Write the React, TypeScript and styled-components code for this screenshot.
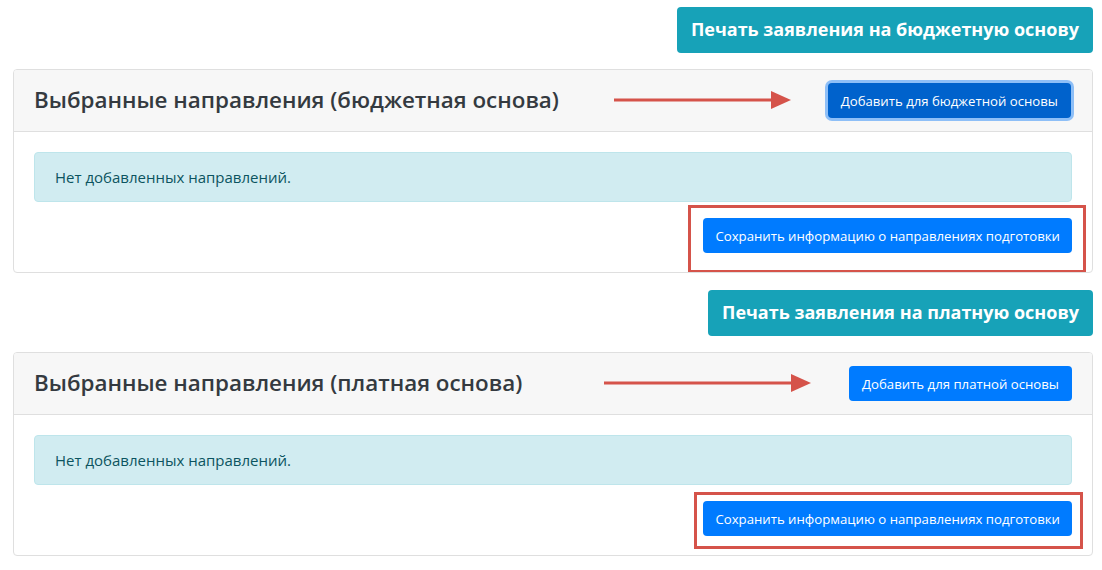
import styled, { createGlobalStyle } from "styled-components";

const GlobalStyle = createGlobalStyle`
  body {
    margin: 0;
    background: #fff;
    font-family: "Open Sans", "Noto Sans", Arial, sans-serif;
    color: #212529;
  }
`;

const Page = styled.div`
  padding: 7px 9px 0 13px;
  display: flex;
  flex-direction: column;
`;

const PrintRow = styled.div`
  display: flex;
  justify-content: flex-end;
  margin-bottom: 16px;
`;

const PrintBtn = styled.button`
  background: #17a2b8;
  color: #fff;
  border: none;
  border-radius: 4px;
  height: 46px;
  padding: 0 14px 3px;
  font-family: "Open Sans", sans-serif;
  font-size: 18px;
  font-weight: 700;
`;

const Card = styled.section`
  border: 1px solid #dfdfdf;
  border-radius: 4px;
  margin-bottom: 17px;
  overflow: hidden;
`;

const CardHeader = styled.header`
  position: relative;
  background: #f7f7f7;
  border-bottom: 1px solid #dfdfdf;
  height: 61px;
  padding: 0 20px;
  display: flex;
  align-items: center;
  justify-content: space-between;
`;

const Title = styled.h4`
  margin: 0 0 3px;
  font-size: 22.4px;
  font-weight: 600;
  color: #343a40;
`;

const AddBtn = styled.button<{ $focused?: boolean }>`
  background: ${(p) => (p.$focused ? "#0062cc" : "#007bff")};
  color: #fff;
  border: none;
  border-radius: 4px;
  height: 35px;
  padding: 0 13px;
  font-family: "Open Sans", sans-serif;
  font-size: 13.2px;
  box-shadow: ${(p) => (p.$focused ? "0 0 0 3px #8ebff7" : "none")};
  margin-right: ${(p) => (p.$focused ? "1px" : "0")};
`;

const Arrow = styled.svg<{ $left: number; $width: number }>`
  position: absolute;
  top: 50%;
  left: ${(p) => p.$left}px;
  width: ${(p) => p.$width}px;
  height: 20px;
  margin-top: -11px;
`;

const CardBody = styled.div`
  padding: 20px 20px 19px;
  display: flex;
  flex-direction: column;
`;

const Alert = styled.div`
  background: #d1ecf1;
  border: 1px solid #bee5eb;
  border-radius: 4px;
  color: #0c5460;
  font-size: 15px;
  height: 48px;
  padding: 0 20px;
  display: flex;
  align-items: center;
  margin-bottom: 16px;
`;

const SaveRow = styled.div`
  position: relative;
  display: flex;
  justify-content: flex-end;
`;

const SaveBtn = styled.button`
  background: #007bff;
  color: #fff;
  border: none;
  border-radius: 4px;
  height: 35px;
  padding: 0 12px;
  font-family: "Open Sans", sans-serif;
  font-size: 13.2px;
`;

const Mark = styled.div<{ $l: number; $r: number; $t: number; $b: number }>`
  position: absolute;
  left: ${(p) => p.$l}px;
  right: ${(p) => p.$r}px;
  top: ${(p) => p.$t}px;
  bottom: ${(p) => p.$b}px;
  border: 3px solid #d5534a;
  pointer-events: none;
`;

const RedArrow = ({ left, width }: { left: number; width: number }) => (
  <Arrow $left={left} $width={width} viewBox={`0 0 ${width} 20`}>
    <line x1="0" y1="10" x2={width - 14} y2="10" stroke="#d5534a" strokeWidth="3" />
    <polygon points={`${width - 20},1 ${width},10 ${width - 20},19`} fill="#d5534a" />
  </Arrow>
);

type SectionProps = {
  print: string;
  title: string;
  add: string;
  focused?: boolean;
  arrow: { left: number; width: number };
  mark: { l: number; r: number; t: number; b: number };
};

const Section = ({ print, title, add, focused, arrow, mark }: SectionProps) => (
  <>
    <PrintRow>
      <PrintBtn>{print}</PrintBtn>
    </PrintRow>
    <Card>
      <CardHeader>
        <Title>{title}</Title>
        <RedArrow left={arrow.left} width={arrow.width} />
        <AddBtn $focused={focused}>{add}</AddBtn>
      </CardHeader>
      <CardBody>
        <Alert>Нет добавленных направлений.</Alert>
        <SaveRow>
          <SaveBtn>Сохранить информацию о направлениях подготовки</SaveBtn>
          <Mark $l={mark.l} $r={mark.r} $t={mark.t} $b={mark.b} />
        </SaveRow>
      </CardBody>
    </Card>
  </>
);

export default function App() {
  return (
    <Page>
      <GlobalStyle />
      <Section
        print="Печать заявления на бюджетную основу"
        title="Выбранные направления (бюджетная основа)"
        add="Добавить для бюджетной основы"
        focused
        arrow={{ left: 600, width: 177 }}
        mark={{ l: 654, r: -14, t: -13, b: -20 }}
      />
      <Section
        print="Печать заявления на платную основу"
        title="Выбранные направления (платная основа)"
        add="Добавить для платной основы"
        arrow={{ left: 590, width: 207 }}
        mark={{ l: 660, r: -11, t: -9, b: -13 }}
      />
    </Page>
  );
}
